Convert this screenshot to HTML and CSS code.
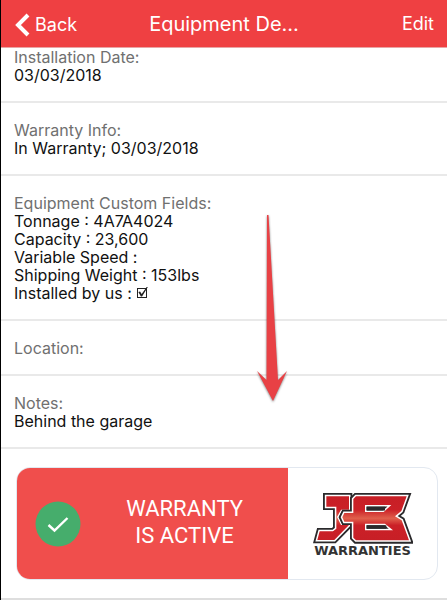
FILE: index.html
```
<!DOCTYPE html>
<html lang="en">
<head>
  <meta charset="UTF-8">
  <title>Equipment Details</title>
  <meta name="viewport" content="width=device-width, initial-scale=1.0">
  <link rel="stylesheet" href="styles.css">
</head>
<body>
  <header class="navbar">
    <a href="#" class="back-button">
      <svg class="chevron" width="16" height="24" viewBox="0 0 16 24">
        <path d="M14 2 L4 12 L14 22" fill="none" stroke="#fff" stroke-width="4"/>
      </svg>
      Back
    </a>
    <h1>Equipment De…</h1>
    <button type="button" class="edit-button">Edit</button>
  </header>

  <main>
    <dl class="details">
      <div class="row first">
        <dt>Installation Date:</dt>
        <dd>03/03/2018</dd>
      </div>
      <div class="row">
        <dt>Warranty Info:</dt>
        <dd>In Warranty; 03/03/2018</dd>
      </div>
      <div class="row">
        <dt>Equipment Custom Fields:</dt>
        <dd>Tonnage : 4A7A4024</dd>
        <dd>Capacity : 23,600</dd>
        <dd>Variable Speed :</dd>
        <dd>Shipping Weight : 153lbs</dd>
        <dd><label class="check">Installed by us : <input type="checkbox" checked></label></dd>
      </div>
      <div class="row">
        <dt>Location:</dt>
      </div>
      <div class="row">
        <dt>Notes:</dt>
        <dd>Behind the garage</dd>
      </div>
    </dl>

    <section class="warranty">
      <div class="card">
        <div class="status">
          <svg class="badge" width="46" height="46" viewBox="0 0 46 46">
            <circle cx="23" cy="23" r="22.5" fill="#46ad6c"/>
            <path d="M13.5 24 L19.5 29.5 L32.5 17" fill="none" stroke="#fff" stroke-width="2.4"/>
          </svg>
          <p>WARRANTY<br>IS ACTIVE</p>
        </div>
        <div class="brand">
          <svg width="100" height="53" viewBox="22 20 300 159" role="img" aria-label="JB">
            <defs>
              <linearGradient id="red" x1="0" y1="36" x2="0" y2="168" gradientUnits="userSpaceOnUse">
                <stop offset="0" stop-color="#c71f26"/>
                <stop offset="0.3" stop-color="#cb2027"/>
                <stop offset="0.5" stop-color="#e0604c"/>
                <stop offset="0.66" stop-color="#cb2027"/>
                <stop offset="1" stop-color="#c71f26"/>
              </linearGradient>
              <path id="j" d="M62 36 H130 V76 H106 L94 98 L106 122 H130 L86 167 H35 L42 141 H82 L92 133 V67 H62 Z"/>
              <path id="b" d="M151 36 H303 L287 80 L268 96 L288 108 L310 168 H151 L143 160 V112 H116 L110 99 L116 86 H143 V44 Z M178 62 V83 H234 L257 62 Z M178 118 V138 H262 L238 118 Z" fill-rule="evenodd"/>
            </defs>
            <use href="#j" fill="#2a292b" stroke="#2a292b" stroke-width="20"/>
            <use href="#j" fill="#fff" stroke="#fff" stroke-width="9"/>
            <use href="#j" fill="url(#red)"/>
            <use href="#b" fill="#2a292b" stroke="#2a292b" stroke-width="20"/>
            <use href="#b" fill="#fff" stroke="#fff" stroke-width="9"/>
            <use href="#b" fill="url(#red)"/>
            <path d="M183 73 H238 M183 128 H242" stroke="#2a292b" stroke-width="11"/>
          </svg>
          <span class="brand-name">WARRANTIES</span>
        </div>
      </div>
    </section>
  </main>

  <!-- scroll hint drawn over the list -->
  <svg class="arrow" width="36" height="194" viewBox="0 0 36 194">
    <path d="M12 1 L13.5 1 L23 166 L32 157 L18 187 L2 157 L11.5 166 Z" fill="#e84145"/>
  </svg>
</body>
</html>
```
FILE: styles.css
```
* {
  box-sizing: border-box;
}

body {
  position: relative;
  min-height: 100vh;
  margin: 0;
  border-left: 1px solid #000;
  background-color: #fff;
  color: #111;
  font-family: Inter, "Open Sans", sans-serif;
  font-size: 16px;
  line-height: 18px;
}

.navbar {
  display: grid;
  grid-template-columns: 1fr auto 1fr;
  align-items: center;
  height: 48px;
  padding: 0 13px;
  border-bottom: 1px solid #e8a5a5;
  background-color: #ef4042;
  color: #fff;
}

.back-button {
  display: flex;
  align-items: center;
  gap: 5px;
  padding-top: 2px;
  color: #fff;
  font-size: 18px;
  text-decoration: none;
}

h1 {
  margin: 0;
  font-size: 20px;
  font-weight: 400;
  line-height: 24px;
}

.edit-button {
  justify-self: end;
  padding: 0;
  border: none;
  background: none;
  color: #fff;
  font-family: inherit;
  font-size: 18px;
  cursor: pointer;
}

.details {
  margin: 0;
}

.row {
  padding: 18px 13px 17px;
  border-bottom: 2px solid #e9e9e9;
}

.row.first {
  padding-top: 0;
}

dt {
  color: #707070;
}

dd {
  margin: 0;
}

.check {
  display: flex;
  align-items: center;
  gap: 5px;
}

.check input {
  position: relative;
  width: 10px;
  height: 10px;
  margin: 0;
  border: 1px solid #222;
  appearance: none;
}

.check input::before {
  content: "";
  position: absolute;
  left: 0;
  top: -2px;
  width: 10px;
  height: 10px;
  background-color: #222;
  clip-path: polygon(5% 50%, 22% 45%, 38% 70%, 88% 0, 100% 0, 42% 95%, 30% 95%);
}

.warranty {
  padding: 18px 9px 18px 15px;
  border-bottom: 2px solid #dedede;
}

.card {
  display: flex;
  min-height: 113px;
  border: 1px solid #e2e8f0;
  border-radius: 14px;
  overflow: hidden;
}

.status {
  flex: 17;
  display: flex;
  align-items: center;
  padding-left: 18px;
  background-color: #f04e4c;
  color: #fff;
}

.status p {
  flex: 1;
  margin: 0;
  padding-bottom: 4px;
  font-family: Roboto, sans-serif;
  font-size: 22px;
  line-height: 27px;
  text-align: center;
}

.brand {
  flex: 10;
  display: flex;
  flex-direction: column;
  align-items: center;
  justify-content: center;
}

.brand-name {
  color: #333;
  font-family: "DejaVu Sans", sans-serif;
  font-size: 13px;
  font-weight: 700;
  line-height: 13px;
}

.arrow {
  position: absolute;
  left: 254px;
  top: 214px;
  filter: drop-shadow(0 1px 1px rgba(0, 0, 0, 0.5));
  pointer-events: none;
}
```
